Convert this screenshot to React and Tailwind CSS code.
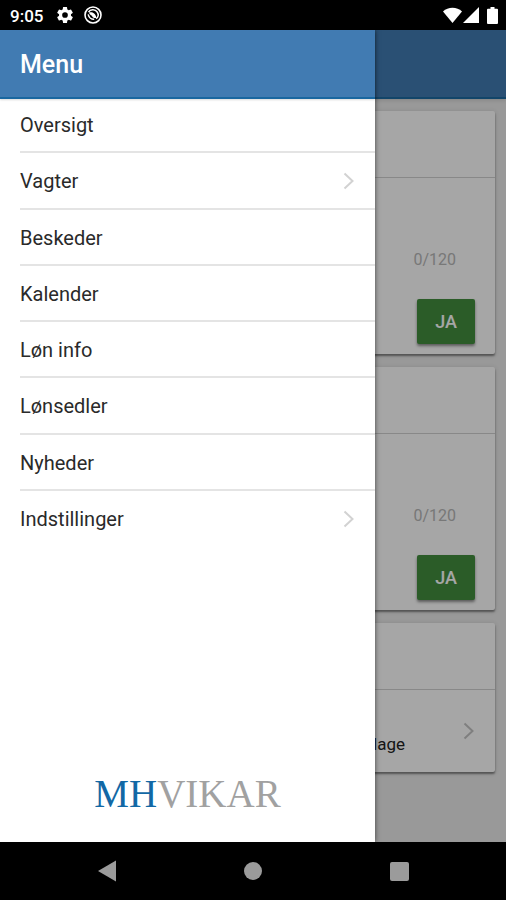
import React from "react";

const menuItems = [
  { label: "Oversigt" },
  { label: "Vagter", nested: true },
  { label: "Beskeder" },
  { label: "Kalender" },
  { label: "Løn info" },
  { label: "Lønsedler" },
  { label: "Nyheder" },
  { label: "Indstillinger", nested: true },
];

function Chevron({ className }) {
  return (
    <svg viewBox="0 0 12 18" className={`h-[18px] w-3 shrink-0 ${className}`} fill="none" stroke="currentColor" strokeWidth="2" aria-hidden="true">
      <path d="M1.5 1.5 9.5 9l-8 7.5" />
    </svg>
  );
}

function StatusBar() {
  return (
    <div className="flex h-[30px] shrink-0 items-center bg-black pr-2 pl-[10px] text-white">
      <span className="mt-[2px] text-[17px] leading-5 font-medium">9:05</span>
      <svg viewBox="0 0 24 24" className="ml-3 h-5 w-5" fill="currentColor" aria-hidden="true">
        <path d="M19.14 12.94a7.07 7.07 0 0 0 0-1.88l2.03-1.58a.5.5 0 0 0 .12-.61l-1.92-3.32a.5.5 0 0 0-.59-.22l-2.39.96a7 7 0 0 0-1.62-.94l-.36-2.54A.48.48 0 0 0 13.93 2.4h-3.84a.48.48 0 0 0-.47.41l-.36 2.54c-.59.24-1.13.57-1.62.94l-2.39-.96a.48.48 0 0 0-.59.22L2.74 8.87a.48.48 0 0 0 .12.61l2.03 1.58a7.1 7.1 0 0 0 0 1.88l-2.03 1.58a.5.5 0 0 0-.12.61l1.92 3.32c.12.22.37.29.59.22l2.39-.96c.5.38 1.03.7 1.62.94l.36 2.54c.05.24.24.41.48.41h3.84c.24 0 .44-.17.47-.41l.36-2.54a7 7 0 0 0 1.62-.94l2.39.96c.22.08.47 0 .59-.22l1.92-3.32a.48.48 0 0 0-.12-.61zM12 15.4a3.400 3.400 0 1 1 0-6.800 3.400 3.400 0 0 1 0 6.800z" />
      </svg>
      <svg viewBox="0 0 20 20" className="ml-2 h-5 w-5" fill="none" stroke="currentColor" aria-hidden="true">
        <circle cx="10" cy="10" r="8" strokeWidth="1.600" />
        <path d="M5.500 7.200C7.200 4.300 12 3.800 14.200 7c1.600 2.400.8 5.200-1 6.800M5.200 9.400c.6 3.200 3.400 5 6 4.800" strokeWidth="1.500" />
        <path d="M6 7.500c3-.8 6.400.4 7.500 5.500-2.800.3-4-.6-4.600-2.300C7.600 10.300 6.500 9.200 6 7.500z" fill="currentColor" stroke="none" />
      </svg>
      <div className="ml-auto flex items-center">
        <svg viewBox="0 0 19 17" className="h-[17px] w-[19px]" fill="currentColor" aria-hidden="true">
          <path d="M0 4.500C2.500 2 6 .8 9.500.8S16.500 2 19 4.500L9.500 16z" />
        </svg>
        <svg viewBox="0 0 16 16" className="ml-px h-4 w-4" fill="currentColor" aria-hidden="true">
          <path d="M16 0v16H0z" />
        </svg>
        <svg viewBox="0 0 11 17" className="ml-2 h-[17px] w-[11px]" fill="currentColor" aria-hidden="true">
          <path d="M3.500 0h4v1.700H10a1 1 0 0 1 1 1V16a1 1 0 0 1-1 1H1a1 1 0 0 1-1-1V2.700a1 1 0 0 1 1-1h2.500z" />
        </svg>
      </div>
    </div>
  );
}

function Card({ children }) {
  return (
    <section className="rounded-[2px] bg-white shadow-[0_2px_2px_rgba(0,0,0,0.4),0_1px_5px_rgba(0,0,0,0.15)]">
      <div className="h-[67px] border-b border-[#d2d2d2]" />
      {children}
    </section>
  );
}

function ReplyCard() {
  return (
    <Card>
      <div className="flex h-44 flex-col items-end justify-end pr-5 pb-[10px]">
        <span className="mr-[19px] text-[16px] leading-5 text-[#b8b8b8]">0/120</span>
        <button
          type="button"
          className="mt-[29px] h-[45px] w-[58px] rounded-[2px] bg-[#438e3e] text-[18px] font-medium text-white shadow-[0_2px_3px_rgba(0,0,0,0.45)]"
        >
          JA
        </button>
      </div>
    </Card>
  );
}

function Drawer() {
  return (
    <aside className="absolute inset-y-0 left-0 flex w-[375px] max-w-full flex-col bg-white shadow-[0_0_5px_rgba(0,0,0,0.6)]">
      <header className="relative flex h-[67px] shrink-0 items-center bg-[#417bb2] px-5 pt-[2px] shadow-[0_2px_0_#1967a0,0_3px_2px_rgba(0,0,0,0.15)]">
        <h1 className="text-[25px] leading-7 font-medium text-white">Menu</h1>
      </header>
      <nav className="grid h-[450px] shrink-0 grid-rows-8 pl-5">
        {menuItems.map(({ label, nested }) => (
          <a
            key={label}
            href="#"
            className="flex items-center justify-between border-b-2 border-[#e4e4e4] pt-[2px] pr-5 text-[20px] leading-6 text-[#2a2a2a] last:border-transparent"
          >
            {label}
            {nested && <Chevron className="text-[#d2d2d2]" />}
          </a>
        ))}
      </nav>
      <div className="mt-auto pb-6 text-center font-['Liberation_Serif',serif] text-[39px] leading-[48px] text-[#a1a1a1]">
        <span className="text-[#1268a5]">MH</span>VIKAR
      </div>
    </aside>
  );
}

function NavigationBar() {
  return (
    <div className="grid h-[58px] shrink-0 grid-cols-3 bg-black px-[34px] text-[#9b9b9b]">
      <button type="button" aria-label="Tilbage" className="flex items-center justify-center">
        <svg viewBox="0 0 18 22" className="h-[22px] w-[18px]" fill="currentColor"><path d="M18 .5v21L0 11z" /></svg>
      </button>
      <button type="button" aria-label="Hjem" className="flex items-center justify-center">
        <span className="size-[18px] rounded-full bg-current" />
      </button>
      <button type="button" aria-label="Seneste" className="flex items-center justify-center">
        <span className="size-[19px] rounded-[2px] bg-current" />
      </button>
    </div>
  );
}

export default function App() {
  return (
    <div className="flex min-h-screen flex-col font-[Roboto,sans-serif]">
      <StatusBar />
      <div className="relative flex grow flex-col overflow-hidden bg-[#ebebeb]">
        <div className="h-[69px] shrink-0 border-b-2 border-[#1c6aa2] bg-[#417bb2] shadow-[0_1px_4px_rgba(0,0,0,0.15)]" />
        <main className="flex flex-col gap-[13px] px-[11px] py-3">
          <ReplyCard />
          <ReplyCard />
          <Card>
            <div className="flex h-[82px] items-center justify-end pr-5">
              <span className="mr-[58px] pt-[26px] text-[17px] leading-6 text-[#222222]">lage</span>
              <Chevron className="text-[#c4c4c4]" />
            </div>
          </Card>
        </main>
        <div className="absolute inset-0 bg-black/35" />
        <Drawer />
      </div>
      <NavigationBar />
    </div>
  );
}
